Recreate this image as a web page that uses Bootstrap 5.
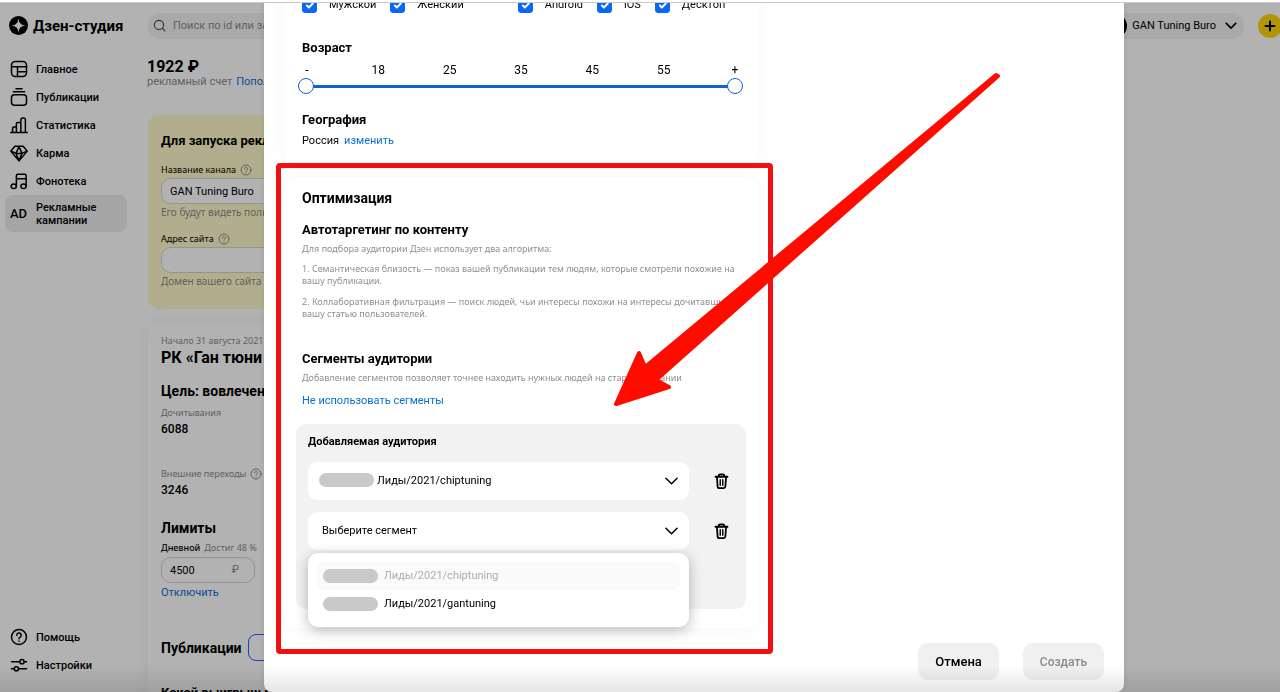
<!DOCTYPE html>
<html lang="ru">
<head>
<meta charset="utf-8">
<meta name="viewport" content="width=device-width, initial-scale=1">
<title>Дзен-студия</title>
<link rel="stylesheet" href="https://cdn.jsdelivr.net/npm/bootstrap@5.3.0/dist/css/bootstrap.min.css">
<style>
  body { font: 400 11px/16px Roboto, "Liberation Sans", sans-serif; color: #000; background: #fff; height: 100vh; overflow: hidden; }
  a { color: #0b6fd0; text-decoration: none; }
  svg { display: block; flex: none; }
  .ico { fill: none; stroke: currentColor; stroke-width: 2; stroke-linecap: round; stroke-linejoin: round; }
  .muted { color: #8c8c8c; }
  .tiny { font-family: "Noto Sans", sans-serif; font-size: 9px; line-height: 12px; }
  .hint { font-family: "Noto Sans", sans-serif; font-size: 10px; line-height: 16px; color: #8c8c8c; }
  .nowrap { white-space: nowrap; }
  .medium { font-weight: 500; }
  h1, h2, h3, h4, p { margin: 0; }
  h3 { font-size: 13px; line-height: 16px; font-weight: 700; }
  h2 { font-size: 14px; line-height: 20px; font-weight: 700; }

  /* page under the dialog */
  .shell { height: 100vh; overflow: hidden; }
  .topbar { height: 51px; flex: none; padding: 0 0 0 9px; }
  .brand { width: 139px; gap: 5px; font-size: 15px; font-weight: 700; line-height: 20px; }
  .finder { height: 26px; width: 400px; border-radius: 13px; background: #f2f2f2; padding-left: 5px; gap: 7px; }
  .finder input { border: 0; background: none; padding: 0; font-size: 11px; outline: 0; }
  .finder input::placeholder { color: #8c8c8c; opacity: 1; }
  .user { height: 26px; border: 0; border-radius: 13px; background: #f2f2f2; padding: 0 7px 0 0; gap: 5px; }
  .avatar { width: 24px; height: 24px; border-radius: 50%; background: #000; }
  .plus { width: 24px; height: 24px; border: 0; padding: 0; border-radius: 50%; background: #ffd60a; margin: 0 -2px 0 14px; }

  .side { width: 147px; flex: none; padding: 4px 20px 13px 5px; }
  .side a { color: #000; font-weight: 500; height: 28px; padding-left: 5px; gap: 8px; line-height: 13px; }
  .side a.current { height: 37px; background: #ececec; border-radius: 8px; }
  .ad { width: 18px; font-size: 13px; font-weight: 500; }

  .workspace { max-width: 900px; }
  .balance { font-size: 16px; line-height: 18px; font-weight: 700; padding-top: 7px; }
  .account { line-height: 11px; gap: 4px; }
  .notice { margin: 28px 0 0 1px; padding: 18px 13px 20px; background: #fffacb; border-radius: 10px; }
  .notice .tiny { margin-top: 15px; margin-bottom: 2px; gap: 4px; }
  .notice .hint + .tiny { margin-top: 13px; }
  .campaign { margin: 14px 0 0 1px; padding: 12px 13px; border-radius: 10px; box-shadow: 0 0 16px rgba(0,0,0,.06); flex: 1; }
  .boxed { height: 26px; border: 1px solid #d5d5d5; border-radius: 10px; padding: 0 8px; font-size: 11px; background: #fff; color: #000; display: block; }
  .title-lg { font-size: 16px; line-height: 22px; font-weight: 700; margin-bottom: 12px; }
  .figure-num { font-size: 12px; line-height: 16px; font-weight: 500; margin-top: 2px; }
  .reads { margin-top: 6px; }
  .visits { margin-top: 31px; gap: 4px; }
  .limits-title { margin-top: 20px; }
  .limit-label { margin: 4px 0 3px; }
  .limit { width: 94px; margin-bottom: 2px; }
  .rouble { right: 16px; top: 5px; }
  .pubs { margin: 33px 0 24px; gap: 6px; }
  .add-pub { height: 27px; width: 90px; border: 1px solid #2962ff; border-radius: 8px; background: none; }

  /* dialog */
  .veil { inset: 0; background: rgba(0,0,0,.3); padding: 0 156px 0 264px; z-index: 10; }
  .dialog { background: #fff; height: 100vh; border-radius: 0 0 8px 8px; padding-left: 20px; overflow: hidden; box-shadow: 0 0 6px rgba(0,0,0,.12); }
  .column { width: 475px; flex: none; }
  .pane { background: #fff; border-radius: 12px; box-shadow: 0 0 20px rgba(0,0,0,.04); padding: 0 18px; }
  .audience { margin-top: -20px; padding-top: 16px; padding-bottom: 14px; }
  .checks { height: 18px; gap: 14px; margin-bottom: 26px; }
  .checks label { gap: 12px; }
  .checks .apart { margin-left: 40px; }
  .checks .form-check-input { width: 15px; height: 15px; margin: 0; border-radius: 3px; flex: none; }
  .checks .form-check-input:checked { background-color: #0a68f5; border-color: #0a68f5; }
  .ages { margin: 6px -6px 0 -7px; font-size: 12px; }
  .ages span { width: 24px; text-align: center; }
  .range { height: 16px; margin: 0 -2px 18px -4px; }
  .range::before { content: ""; position: absolute; left: 8px; right: 8px; top: 7px; height: 3px; background: #1264cc; }
  .range input { -webkit-appearance: none; appearance: none; position: absolute; inset: 0; width: 100%; height: 16px; margin: 0; background: none; pointer-events: none; }
  .range input::-webkit-slider-thumb { -webkit-appearance: none; width: 16px; height: 16px; border-radius: 50%; background: #fff; border: 1px solid #1264cc; pointer-events: auto; }
  .geo { margin-top: 5px; gap: 5px; }

  .optim { margin-top: 15px; padding-top: 10px; padding-bottom: 19px; }
  .optim .tiny { color: #8f8f8f; }
  .auto-title { margin-top: 14px; }
  .lead-in { padding-top: 5px; }
  .second { margin-top: 9px; }
  .seg-title { margin-top: 31px; }
  .skip { margin-top: 9px; }
  .segments { margin: 15px -5px 0 -6px; padding: 9px 12px 59px; background: #f2f2f2; border-radius: 10px; }
  .segments h4 { font-size: 11px; line-height: 17px; font-weight: 700; margin-bottom: 12px; }
  .seg-row { gap: 24px; padding-right: 4px; }
  .seg-row + .seg-row { margin-top: 12px; }
  .seg-row .form-select { height: 38px; border: 0; border-radius: 9px; font-size: 11px; line-height: 16px; color: #000; padding: 0 40px 0 14px;
    background: #fff url("data:image/svg+xml,%3Csvg xmlns='http://www.w3.org/2000/svg' viewBox='0 0 14 8'%3E%3Cpath d='M1 1l6 6 6-6' fill='none' stroke='%23000' stroke-width='1.6' stroke-linecap='round' stroke-linejoin='round'/%3E%3C/svg%3E") no-repeat right 11px center / 13px 8px; }
  .seg-row .form-select.masked { padding-left: 69px; }
  .mask-pill { width: 55px; height: 14px; border-radius: 7px; background: #c9c9c9; flex: none; }
  .select-mask { left: 11px; top: 11px; }
  .trash { border: 0; background: none; padding: 0; width: 17px; }
  .menu.dropdown-menu { top: 100%; left: 0; right: 0; margin: 3px 0 0; padding: 9px; border: 0; border-radius: 10px; font-size: 11px; box-shadow: 0 3px 14px rgba(0,0,0,.28); }
  .menu .dropdown-item { height: 28px; padding: 0 6px; gap: 6px; border-radius: 7px; color: #000; line-height: 16px; }
  .menu .dropdown-item.disabled { color: #adadad; background: #fafafa; }

  .frame { inset: -15px -14px -26px -8px; border: 5px solid #f01010; border-radius: 4px; pointer-events: none; }
  .arrow { left: 328px; top: -106px; pointer-events: none; z-index: 1100; }

  .actions { padding: 0 20px 12px; gap: 24px; }
  .actions .btn { height: 37px; border: 0; border-radius: 10px; background: #f0f0f0; font-size: 13px; line-height: 16px; font-weight: 500; padding: 0 17px; color: #000; }
  .actions .btn:disabled { color: #8a8a8a; opacity: 1; font-size: 12px; }
  .edge-top { inset: 0 0 auto 0; height: 3px; background: #fff; border-bottom: 1px solid #c9c9cd; z-index: 20; }
  .edge-bottom { inset: auto 0 0 0; height: 26px; background: linear-gradient(rgba(0,0,0,0), rgba(0,0,0,.1)); z-index: 20; pointer-events: none; }
</style>
</head>
<body>
<svg width="0" height="0" class="position-absolute">
  <symbol id="help" viewBox="0 0 24 24"><circle cx="12" cy="12" r="10"/><path d="M9 9.700a3 3 0 1 1 4.600 2.400c-1 .6-1.600 1-1.600 2.200M12 17.300v.2"/></symbol>
  <symbol id="bin" viewBox="0 0 24 24"><path stroke-width="2.500" d="M3.500 6h17M8 6V4.500C8 3 9 2.500 10 2.500h4c1 0 2 .5 2 2V6M5.500 6l1 13.500C6.600 21 7.500 22 9 22h6c1.500 0 2.400-1 2.500-2.500L18.500 6"/><path d="M10.200 10v8M13.800 10v8"/></symbol>
</svg>

<div class="shell d-flex flex-column">
  <header class="topbar d-flex align-items-center">
    <div class="brand d-flex align-items-center">
      <svg width="19" height="19" viewBox="0 0 20 20"><circle cx="10" cy="10" r="10"/><path fill="#fff" d="M10 1.500c.3 6 2.500 8.200 8.500 8.500-6 .3-8.200 2.500-8.500 8.500-.3-6-2.500-8.200-8.500-8.500 6-.3 8.200-2.500 8.500-8.500z"/></svg>
      <span>Дзен-студия</span>
    </div>
    <label class="finder d-flex align-items-center">
      <svg class="ico" width="13" height="13" viewBox="0 0 24 24" style="color:#444"><circle cx="11" cy="11" r="8.500"/><path d="M17.500 17.500L22 22"/></svg>
      <input type="search" placeholder="Поиск по id или за" aria-label="Поиск">
    </label>
    <button class="user d-flex align-items-center ms-auto" type="button">
      <span class="avatar"></span><span>GAN Tuning Buro</span>
      <svg class="ico ms-1" width="12" height="8" viewBox="0 0 14 9"><path d="M1.500 1.500L7 7l5.500-5.500"/></svg>
    </button>
    <button class="plus d-flex align-items-center justify-content-center" type="button" aria-label="Добавить">
      <svg class="ico" width="12" height="12" viewBox="0 0 12 12"><path d="M6 1.500v9M1.500 6h9"/></svg>
    </button>
  </header>

  <div class="d-flex flex-grow-1 overflow-hidden">
    <nav class="side d-flex flex-column">
      <a href="#" class="d-flex align-items-center"><svg class="ico" width="18" height="18" viewBox="0 0 24 24"><rect x="2" y="2" width="20" height="20" rx="5"/><path d="M2 9h20M10 9v13M10 15.500h12"/></svg>Главное</a>
      <a href="#" class="d-flex align-items-center"><svg class="ico" width="18" height="18" viewBox="0 0 24 24"><rect x="2" y="9" width="20" height="14" rx="4"/><path d="M4.500 5h15M8 1h8"/></svg>Публикации</a>
      <a href="#" class="d-flex align-items-center"><svg class="ico" width="18" height="18" viewBox="0 0 24 24"><path d="M1 22h22M3.500 22v-6c0-1 .5-1.500 1.500-1.500h3.500M8.500 22V10c0-1 .6-1.500 1.500-1.500h4M14.500 22V5c0-1.500.8-2.500 2.500-2.500h1c1.700 0 2.500 1 2.500 2.500v17"/></svg>Статистика</a>
      <a href="#" class="d-flex align-items-center"><svg class="ico" width="18" height="18" viewBox="0 0 24 24"><path d="M6.500 3h11L23 9.500 12 22.500 1 9.500zM1.500 9.500l6.500 3h8l6.500-3M8 12.500l4 10 4-10M8 12.500l4-9 4 9"/></svg>Карма</a>
      <a href="#" class="d-flex align-items-center"><svg class="ico" width="18" height="18" viewBox="0 0 24 24"><path d="M8.500 19V5c0-1.200.8-2 2-2h9c1.300 0 2 .8 2 2v14M8.500 9h13"/><ellipse cx="5" cy="19" rx="3.500" ry="3"/><ellipse cx="18" cy="19" rx="3.500" ry="3"/></svg>Фонотека</a>
      <a href="#" class="current d-flex align-items-center"><span class="ad">AD</span><span>Рекламные<br>кампании</span></a>
      <a href="#" class="d-flex align-items-center mt-auto"><svg class="ico" width="18" height="18"><use href="#help"/></svg>Помощь</a>
      <a href="#" class="d-flex align-items-center"><svg class="ico" width="18" height="18" viewBox="0 0 24 24"><path d="M2 7.500h11M19 7.500h3M2 17h3.500M11.500 17H22"/><circle cx="16" cy="7.500" r="2.800"/><circle cx="8.500" cy="17" r="2.800"/></svg>Настройки</a>
    </nav>

    <main class="workspace flex-grow-1 d-flex flex-column nowrap">
      <div class="balance">1922 ₽</div>
      <div class="account d-flex"><span class="muted">рекламный счет</span><a href="#">Попол</a></div>

      <section class="notice">
        <h3>Для запуска рекл</h3>
        <label for="channel" class="tiny d-flex">Название канала <svg class="ico muted" width="12" height="12"><use href="#help"/></svg></label>
        <input id="channel" class="boxed w-100" value="GAN Tuning Buro">
        <p class="hint">Его будут видеть поль</p>
        <label for="site" class="tiny d-flex">Адрес сайта <svg class="ico muted" width="12" height="12"><use href="#help"/></svg></label>
        <input id="site" class="boxed w-100">
        <p class="hint">Домен вашего сайта</p>
      </section>

      <section class="campaign">
        <p class="tiny muted">Начало 31 августа 2021</p>
        <h1 class="title-lg">РК «Ган тюни</h1>
        <h2>Цель: вовлечен</h2>
        <p class="tiny muted reads">Дочитывания</p>
        <p class="figure-num">6088</p>
        <p class="tiny muted visits d-flex">Внешние переходы <svg class="ico" width="12" height="12"><use href="#help"/></svg></p>
        <p class="figure-num">3246</p>
        <h2 class="limits-title">Лимиты</h2>
        <label for="limit" class="tiny limit-label d-flex gap-1"><span class="medium">Дневной</span><span class="muted">Достиг 48 %</span></label>
        <div class="limit position-relative"><input id="limit" class="boxed w-100" value="4500"><span class="rouble muted position-absolute">₽</span></div>
        <a href="#" class="d-block">Отключить</a>
        <div class="pubs d-flex align-items-center"><h2>Публикации</h2><button class="add-pub" type="button" aria-label="Добавить публикацию"></button></div>
        <h3>Какой выигрыш м</h3>
      </section>
    </main>
  </div>
</div>

<div class="veil position-fixed">
  <div class="dialog d-flex position-relative" role="dialog" aria-label="Новая кампания">
    <div class="column">
      <section class="pane audience">
        <div class="checks d-flex align-items-center">
          <label class="d-flex align-items-center"><input class="form-check-input" type="checkbox" checked><span>Мужской</span></label>
          <label class="d-flex align-items-center"><input class="form-check-input" type="checkbox" checked><span>Женский</span></label>
          <label class="d-flex align-items-center apart"><input class="form-check-input" type="checkbox" checked><span>Android</span></label>
          <label class="d-flex align-items-center"><input class="form-check-input" type="checkbox" checked><span>iOS</span></label>
          <label class="d-flex align-items-center"><input class="form-check-input" type="checkbox" checked><span>Десктоп</span></label>
        </div>
        <h3>Возраст</h3>
        <div class="ages d-flex justify-content-between"><span>-</span><span>18</span><span>25</span><span>35</span><span>45</span><span>55</span><span>+</span></div>
        <div class="range position-relative">
          <input type="range" min="0" max="6" value="0" aria-label="Возраст от">
          <input type="range" min="0" max="6" value="6" aria-label="Возраст до">
        </div>
        <h3>География</h3>
        <div class="geo d-flex"><span>Россия</span><a href="#">изменить</a></div>
      </section>

      <section class="pane optim position-relative">
        <h2>Оптимизация</h2>
        <h3 class="auto-title">Автотаргетинг по контенту</h3>
        <p class="tiny lead-in">Для подбора аудитории Дзен использует два алгоритма:</p>
        <p class="tiny mt-2">1. Семантическая близость — показ вашей публикации тем людям, которые смотрели похожие на<br>вашу публикации.</p>
        <p class="tiny second">2. Коллаборативная фильтрация — поиск людей, чьи интересы похожи на интересы дочитавших<br>вашу статью пользователей.</p>
        <h3 class="seg-title">Сегменты аудитории</h3>
        <p class="tiny lead-in">Добавление сегментов позволяет точнее находить нужных людей на старте кампании</p>
        <a href="#" class="skip d-block">Не использовать сегменты</a>

        <div class="segments">
          <h4>Добавляемая аудитория</h4>
          <div class="seg-row d-flex align-items-center">
            <div class="position-relative flex-grow-1">
              <select class="form-select masked" aria-label="Сегмент 1"><option>Лиды/2021/chiptuning</option></select>
              <span class="mask-pill select-mask position-absolute"></span>
            </div>
            <button class="trash" type="button" aria-label="Удалить"><svg class="ico" width="17" height="18"><use href="#bin"/></svg></button>
          </div>
          <div class="seg-row d-flex align-items-center">
            <div class="position-relative flex-grow-1">
              <select class="form-select" aria-label="Сегмент 2"><option>Выберите сегмент</option></select>
              <div class="menu dropdown-menu show">
                <button type="button" class="dropdown-item disabled d-flex align-items-center"><span class="mask-pill"></span>Лиды/2021/chiptuning</button>
                <button type="button" class="dropdown-item d-flex align-items-center"><span class="mask-pill"></span>Лиды/2021/gantuning</button>
              </div>
            </div>
            <button class="trash" type="button" aria-label="Удалить"><svg class="ico" width="17" height="18"><use href="#bin"/></svg></button>
          </div>
        </div>

        <div class="frame position-absolute"></div>
        <svg class="arrow position-absolute" width="390" height="340" viewBox="0 0 390 340"><path d="M384 3L33 295 27 281 4 332 57 315 44 308 386 4z" fill="#ff0c00" stroke="#ff0c00" stroke-width="4" stroke-linejoin="round"/></svg>
      </section>
    </div>
    <div class="actions flex-grow-1 d-flex justify-content-end align-items-end">
      <button type="button" class="btn">Отмена</button>
      <button type="button" class="btn" disabled>Создать</button>
    </div>
  </div>
</div>
<div class="edge-top position-fixed"></div>
<div class="edge-bottom position-fixed"></div>
<script src="https://cdn.jsdelivr.net/npm/bootstrap@5.3.0/dist/js/bootstrap.bundle.min.js"></script>
</body>
</html>
